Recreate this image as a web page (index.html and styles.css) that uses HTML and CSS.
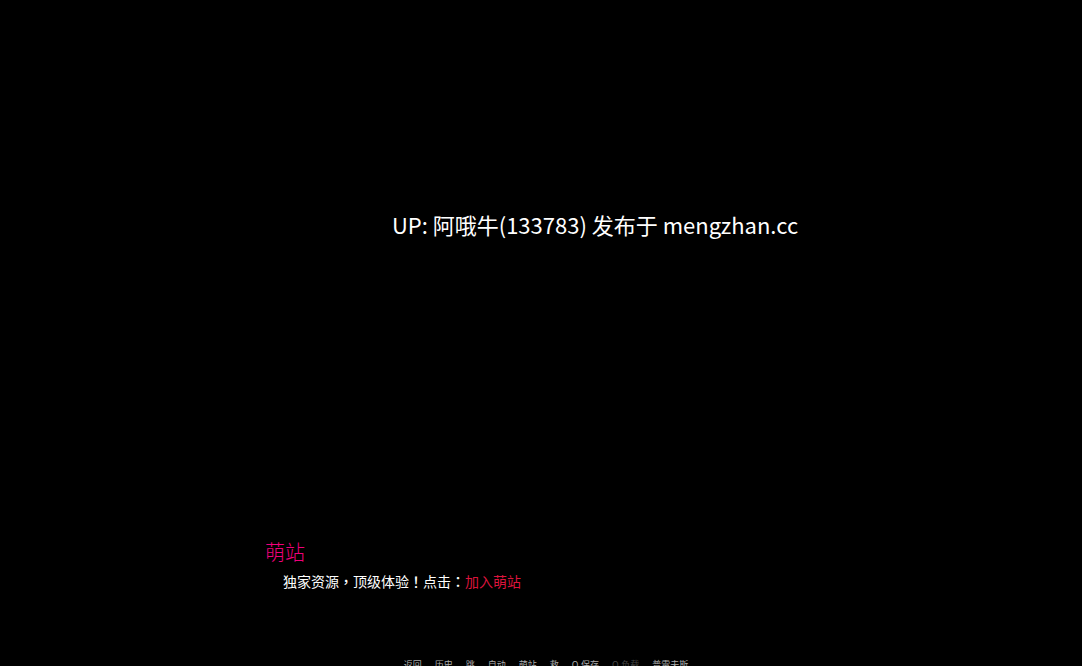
FILE: index.html
```html
<!DOCTYPE html>
<html lang="zh-CN">
<head>
    <meta charset="UTF-8">
    <title>萌站</title>
    <link rel="stylesheet" href="styles.css">
</head>
<body>
<div class="screen">
    <div class="stage">
        <h1>UP: 阿哦牛(133783) 发布于 mengzhan.cc</h1>
    </div>
    <div class="say">
        <h2 class="who">萌站</h2>
        <p class="what">独家资源<span class="mark" lang="zh-TW">，</span>顶级体验<span class="mark" lang="zh-TW">！</span>点击<span class="mark" lang="zh-TW">：</span><a href="#">加入萌站</a></p>
    </div>
    <div class="quick">
        <button type="button">返回</button>
        <button type="button">历史</button>
        <button type="button">跳</button>
        <button type="button">自动</button>
        <button type="button">萌站</button>
        <button type="button">救</button>
        <button type="button">Q.保存</button>
        <button type="button" disabled>Q.负载</button>
        <button type="button">普雷夫斯</button>
    </div>
</div>
</body>
</html>
```

FILE: styles.css
```css
* {
    padding: 0;
    margin: 0;
    box-sizing: border-box;
}

body {
    background: #000;
    color: #fff;
    font-family: "Noto Sans CJK SC", sans-serif;
}

.screen {
    display: flex;
    flex-direction: column;
    height: 100vh;
    overflow: hidden;
}

.stage {
    flex: 1;
    padding-top: 208px;
    padding-left: 108px;
    text-align: center;
}

.stage h1 {
    font-size: 22px;
    line-height: 32px;
    font-weight: 400;
}

.say {
    width: 51%;
    height: 118px;
    margin: 0 auto;
}

.who {
    color: #f0007c;
    font-size: 20px;
    line-height: 28px;
    font-weight: 300;
}

.what {
    margin-top: 5px;
    padding-left: 18px;
    font-size: 14px;
    line-height: 20px;
    font-weight: 400;
}

.what a {
    color: #dc143c;
    text-decoration: none;
}

/* full-width punctuation centred in its cell */
.mark {
    font-family: "Noto Sans CJK TC", sans-serif;
    font-weight: 500;
}

/* the quick menu runs off the bottom edge */
.quick {
    display: flex;
    justify-content: center;
    gap: 13px;
    height: 10px;
    padding-left: 10px;
}

.quick button {
    height: 18px;
    border: 0;
    background: none;
    color: #aaa;
    font-family: inherit;
    font-size: 9px;
    line-height: 18px;
    cursor: pointer;
}

.quick button:disabled {
    color: #444;
    cursor: default;
}
```
